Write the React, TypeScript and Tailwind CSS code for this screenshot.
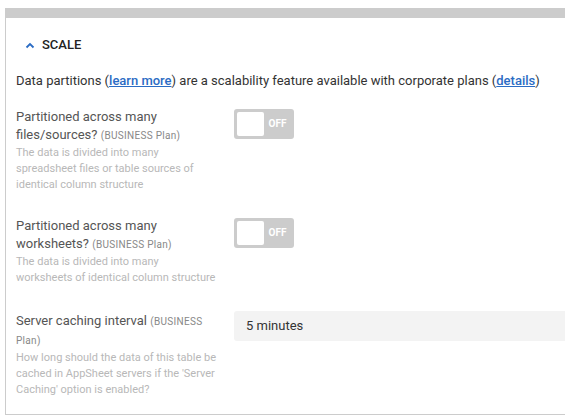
function Toggle() {
  return (
    <div className="mt-px flex h-[30px] w-[60px] items-center rounded-[3px] bg-[#cccccc] p-[3px]">
      <div className="h-[24px] w-[27px] rounded-[2px] bg-white" />
      <span className="flex-1 text-center text-[10px] font-bold leading-none text-white">OFF</span>
    </div>
  );
}

function Plan({ children }: { children: React.ReactNode }) {
  return <span className="text-[10px] leading-[18px] tracking-[0.3px] text-[#888]">{children}</span>;
}

function Row({
  label,
  plan,
  help,
  control,
  className,
}: {
  label: React.ReactNode;
  plan?: string;
  help: string;
  control: React.ReactNode;
  className?: string;
}) {
  return (
    <div className={'flex gap-[18px] ' + (className ?? '')}>
      <div className="w-[200px] shrink-0">
        <div className="text-[13px] leading-[18px] text-[#555]">
          {label} <Plan>{plan ?? '(BUSINESS Plan)'}</Plan>
        </div>
        <div className="text-[11px] leading-4 text-[#b8b8b8]">{help}</div>
      </div>
      <div className="flex-1">{control}</div>
    </div>
  );
}

export default function App() {
  return (
    <div className="h-[417px] w-[565px] overflow-hidden bg-white pl-[5px] pt-2 font-['Roboto',sans-serif]">
      <div className="w-[620px] border-b border-l border-[#cccccc]">
        <div className="h-[10px] bg-[#cccccc]" />

        <div className="flex items-center gap-[7px] pb-[19px] pl-[19px] pt-[19px]">
          <svg width="10" height="7" viewBox="0 0 10 7" fill="none">
            <polyline points="1.5,5.5 5,2 8.5,5.5" stroke="#2b6cc4" strokeWidth="1.8" />
          </svg>
          <span className="text-[13px] font-medium leading-4 text-[#222]">SCALE</span>
        </div>

        <div className="pl-[10px] pr-4 pb-4">
          <p className="text-[13px] leading-[18px] text-[#333]">
            Data partitions (
            <a className="font-medium text-[#2b6cc4] underline">learn more</a>) are a scalability feature
            available with corporate plans (<a className="font-medium text-[#2b6cc4] underline">details</a>)
          </p>

          <Row
            className="mt-[18px]"
            label="Partitioned across many files/sources?"
            help="The data is divided into many spreadsheet files or table sources of identical column structure"
            control={<Toggle />}
          />

          <Row
            className="mt-6"
            label="Partitioned across many worksheets?"
            help="The data is divided into many worksheets of identical column structure"
            control={<Toggle />}
          />

          <Row
            className="mt-[26px]"
            label="Server caching interval"
            plan="(BUSINESS Plan)"
            help="How long should the data of this table be cached in AppSheet servers if the 'Server Caching' option is enabled?"
            control={
              <div className="-mt-px flex h-[30px] items-center rounded-l-[3px] bg-[#f3f3f3] pl-3 text-[13px] text-[#333]">
                5 minutes
              </div>
            }
          />
        </div>
      </div>
    </div>
  );
}
